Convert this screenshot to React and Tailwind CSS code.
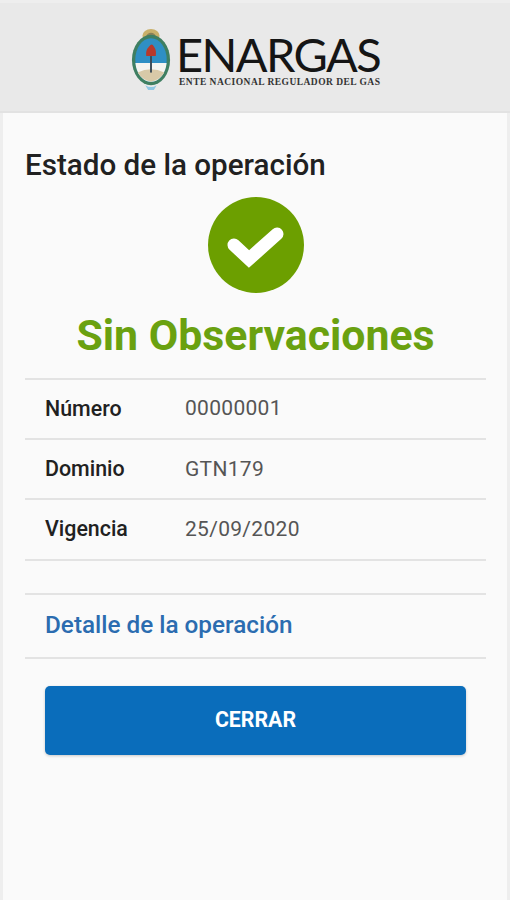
const rows = [
  { label: "Número", value: "00000001" },
  { label: "Dominio", value: "GTN179" },
  { label: "Vigencia", value: "25/09/2020" },
];

function Escudo() {
  return (
    <svg width="40" height="64" viewBox="0 0 42 66" preserveAspectRatio="none" className="shrink-0 mt-[3px]">
      {/* sol */}
      <ellipse cx="21" cy="9" rx="9" ry="7" fill="#c9b06a" />
      <ellipse cx="21" cy="10" rx="5" ry="4" fill="#8a8058" />
      {/* laureles */}
      <ellipse cx="21" cy="34" rx="20" ry="26" fill="#3f7f62" />
      <ellipse cx="21" cy="34" rx="16.5" ry="22.5" fill="#2f8fc4" />
      <path d="M4.6 37 H37.4 A16.5 22.5 0 0 1 21 56.5 A16.5 22.5 0 0 1 4.6 37 Z" fill="#f4f4f0" />
      <path d="M7 47 Q21 40 35 47 Q30 55 21 56.5 Q12 55 7 47 Z" fill="#d8c9a8" />
      {/* gorro y pica */}
      <path d="M16 30 Q15 24 19 20 Q22 16 24 20 Q27 24 26 30 Z" fill="#b8392b" />
      <rect x="20" y="30" width="2" height="17" fill="#3a4a55" />
      <path d="M15 60 Q21 64 27 60 L24 65 H18 Z" fill="#8fc7e4" />
    </svg>
  );
}

export default function App() {
  return (
    <div className="min-h-[900px] bg-[#eeeeee] px-[3px] font-['Roboto',sans-serif]">
      <div className="min-h-[900px] bg-[#fafafa]">
        {/* Header */}
        <div className="h-[113px] -mx-[3px] bg-[#e9e9e9] border-t-[3px] border-t-[#eeeeee] border-b-2 border-b-[#e2e2e2] flex items-center gap-[5px] pl-[131px]">
          <Escudo />
          <div className="flex flex-col w-[205px] pt-[3px]">
            <span className="font-['Lato',sans-serif] text-[47px] leading-[46px] tracking-[-1.6px] text-[#151515] whitespace-nowrap">
              ENARGAS
            </span>
            <span className="font-['Liberation_Serif',serif] font-bold text-[9.5px] leading-[10px] tracking-[0.47px] text-[#333333] whitespace-nowrap pl-[3px]">
              ENTE NACIONAL REGULADOR DEL GAS
            </span>
          </div>
        </div>

        <div className="pl-[22px] pr-[21px] pt-[36px]">
          <h1 className="text-[29.6px] leading-[32px] font-medium text-[#212121]">Estado de la operación</h1>

          {/* Estado */}
          <div className="flex flex-col items-center">
            <div className="mt-[16px] w-[96px] h-[96px] rounded-full bg-[#6c9f00]">
              <svg width="96" height="96" viewBox="0 0 96 96">
                <path d="M26 48 L41 62 L69 37" fill="none" stroke="#ffffff" strokeWidth="13" strokeLinecap="round" strokeLinejoin="miter" />
              </svg>
            </div>
            <p className="mt-[17px] text-[42.8px] leading-[50px] font-bold text-[#6aa110]">Sin Observaciones</p>
          </div>

          {/* Datos */}
          <div className="mt-[18px] border-t-2 border-[#e3e3e3]">
            {rows.map((row) => (
              <div key={row.label} className="h-[60.2px] flex items-center pl-[20px] border-b-2 border-[#e3e3e3]">
                <span className="w-[140px] text-[21.4px] font-medium text-[#212121]">{row.label}</span>
                <span className="text-[21px] text-[#555555] tracking-[0.3px]">{row.value}</span>
              </div>
            ))}
          </div>

          {/* Detalle */}
          <div className="mt-[32px] h-[66px] flex items-center pl-[20px] border-y-2 border-[#e3e3e3]">
            <span className="text-[24.3px] font-medium text-[#2b6cb0]">Detalle de la operación</span>
          </div>

          <button className="mt-[27px] ml-[20px] w-[421px] h-[69px] rounded-[5px] bg-[#0a6dbb] text-white text-[21.3px] font-bold shadow-[0_1px_3px_rgba(0,0,0,0.2)]">
            CERRAR
          </button>
        </div>
      </div>
    </div>
  );
}
